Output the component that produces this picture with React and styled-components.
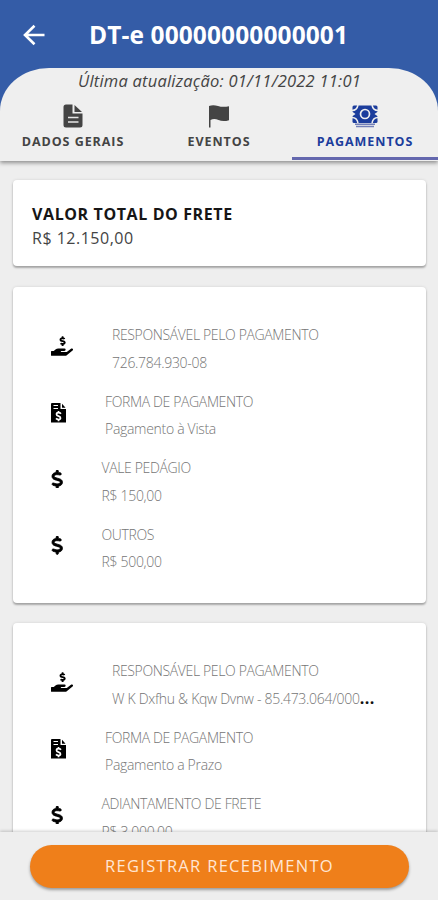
import React from "react";
import styled, { createGlobalStyle } from "styled-components";
import { FaHandHoldingUsd } from "react-icons/fa";
import { FaDollarSign } from "react-icons/fa6";

const GlobalStyle = createGlobalStyle`
  * { box-sizing: border-box; }
  body { margin: 0; background: #eeeeee; }
`;

const Screen = styled.div`
  width: 438px;
  height: 900px;
  display: flex;
  flex-direction: column;
  overflow: hidden;
  background: #eeeeee;
  font-family: "Open Sans", "Noto Sans", sans-serif;
  white-space: nowrap;
`;

const Header = styled.header`
  flex: none;
  height: 161px;
  background: linear-gradient(#345ca7 0 120px, #efefef 120px);
  box-shadow: 0 2px 4px rgba(0, 0, 0, 0.4);
  z-index: 1;
`;

const TitleBar = styled.div`
  height: 68px;
  display: flex;
  align-items: center;
  padding: 2px 0 0 22px;
`;

const BackButton = styled.button`
  width: 24px;
  height: 24px;
  padding: 0;
  border: 0;
  background: none;
  display: flex;
`;

const Title = styled.h1`
  margin: 0 0 0 43px;
  color: #fff;
  font-size: 24.5px;
  line-height: 34px;
  font-weight: 700;
  letter-spacing: 0.1px;
`;

const Sheet = styled.div`
  height: 93px;
  background: #efefef;
  border-radius: 49px 49px 0 0 / 43px 43px 0 0;
`;

const Updated = styled.div`
  height: 26px;
  padding-left: 1px;
  text-align: center;
  font-size: 16.5px;
  line-height: 26px;
  font-style: italic;
  color: #444;
  letter-spacing: 0.22px;
`;

const Tabs = styled.nav`
  display: grid;
  grid-template-columns: repeat(3, 1fr);
  height: 66px;
`;

const Tab = styled.button`
  border: 0;
  padding: 10px 0 0;
  background: none;
  border-bottom: 3px solid ${(p) => (p.$active ? "#6468ae" : "transparent")};
  color: ${(p) => (p.$active ? "#1c3d9c" : "#444444")};
  display: flex;
  flex-direction: column;
  align-items: center;
  gap: 4px;
  font: 700 12.5px/20px "Open Sans", sans-serif;
  letter-spacing: 0.95px;
`;

const Content = styled.main`
  flex: 1;
  min-height: 0;
  overflow: hidden;
  padding: 19px 12px 0 13px;
  display: flex;
  flex-direction: column;
  gap: 20px;
`;

const Card = styled.section`
  flex: none;
  background: #fff;
  border-radius: 4px;
  box-shadow: 0 2px 2px rgba(0, 0, 0, 0.28), 0 0 3px rgba(0, 0, 0, 0.12);
`;

const TotalCard = styled(Card)`
  height: 86px;
  margin-bottom: 1px;
  padding: 23px 19px;
`;

const PaymentCard = styled(Card)`
  height: 316px;
  padding: 34px 38px;
`;

const TotalLabel = styled.div`
  color: #161616;
  font-size: 16px;
  line-height: 23px;
  font-weight: 700;
  letter-spacing: 0.6px;
`;

const TotalValue = styled.div`
  color: #444;
  font-size: 16px;
  line-height: 23px;
  letter-spacing: 0.5px;
  padding-top: 1px;
`;

const Row = styled.div`
  height: 66.5px;
  display: flex;
  gap: 39px;
`;

const RowIcon = styled.span`
  display: flex;
  flex: none;
  height: 50px;
  width: ${(p) => p.$width}px;
  align-items: center;
  justify-content: center;
  color: #000;
`;

const RowText = styled.div`
  color: #757575;
  font-size: 14px;
  line-height: 27.5px;
  font-weight: 300;
`;

const Label = styled.div`
  letter-spacing: -0.36px;
`;

const Value = styled.div`
  display: flex;
  letter-spacing: -0.3px;
`;

const Ellipsis = styled.span`
  color: #111;
  font-weight: 700;
  font-size: 16px;
  letter-spacing: 0.5px;
`;

const Footer = styled.footer`
  flex: none;
  height: 68px;
  padding: 13px 29px 0 30px;
  background: #eeeeee;
  box-shadow: 0 -1px 3px rgba(0, 0, 0, 0.2);
  z-index: 1;
`;

const PrimaryButton = styled.button`
  width: 100%;
  height: 43px;
  border: 0;
  padding: 0 0 2px;
  border-radius: 22px;
  background: #ef7f1a;
  color: #ffe6d4;
  box-shadow: 0 2px 3px rgba(0, 0, 0, 0.35);
  font: 500 16.5px/41px "Open Sans", sans-serif;
  letter-spacing: 1.3px;
`;

const BackArrow = () => (
  <svg width="24" height="24" viewBox="0 0 24 24" fill="none" stroke="#fff" strokeWidth="2.6">
    <path d="M22.5 12H3.2M12.5 2.8 3 12l9.5 9.2" />
  </svg>
);

const DocumentIcon = () => (
  <svg width="20" height="24" viewBox="0 0 20 24">
    <path fill="#444" d="M3 .5h6.500v9h10V21q0 2.500-2.500 2.500H3Q.5 23.500.5 21V3Q.5.5 3 .5Z" />
    <path fill="#444" d="M11.500 1 19 8h-7.500Z" />
    <path stroke="#e5e5e5" strokeWidth="1.700" d="M5 13.500h10.500M5 18h10.500" />
  </svg>
);

const FlagIcon = () => (
  <svg width="22" height="24" viewBox="0 0 22 24">
    <path fill="#444" d="M1 2Q5 .4 10 2t11 .2v14Q15 18 10.500 16T2.500 16v7.500H1Z" />
  </svg>
);

const CashIcon = () => (
  <svg width="26" height="24" viewBox="0 0 26 24">
    <rect x=".5" y="1.500" width="25" height="17.500" rx="1.500" fill="#1c3d9c" />
    <g fill="none" stroke="#efefef">
      <circle cx="13" cy="10" r="4.500" strokeWidth="1.700" />
      <path strokeWidth="1.500" d="M0 6.500Q5 6.500 6 1M20 1q1 5.500 6 5.500M0 13.500q5 0 6 5.500M20 19q1-5.500 6-5.500" />
    </g>
    <path fill="#efefef" d="M0 7.500 3.500 10 0 12.500ZM26 7.500 22.500 10l3.500 2.500Z" />
    <path stroke="#7380b9" strokeWidth="1.500" d="M3 20.300h20M4 22.400h18" />
  </svg>
);

const InvoiceIcon = () => (
  <svg width="15" height="20" viewBox="0 0 15 20">
    <path d="M1 0h8.500v6H15v13.500H0V1Q0 0 1 0Z" />
    <path d="M11 .8 14.500 4.700H11Z" />
    <path stroke="#fff" strokeWidth="1" d="M2.500 2.500H7M2.500 5.500H7" />
    <path
      fill="none"
      stroke="#fff"
      strokeWidth="1.700"
      d="M10 10.800Q9 9.700 7.500 9.700 5.500 9.700 5.500 11.300q0 1.300 2 1.800t2 1.800q0 1.600-2 1.600-1.500 0-2.500-1.100M7.500 8v1.700M7.500 16.500V18.200"
    />
  </svg>
);

const DollarIcon = styled(FaDollarSign)`
  flex: none;
  stroke: #000;
  stroke-width: 22px;
`;

const icons = {
  hand: { width: 22, glyph: <FaHandHoldingUsd size={22} /> },
  invoice: { width: 15, glyph: <InvoiceIcon /> },
  dollar: { width: 11.5, glyph: <DollarIcon size={18.500} /> },
};

const PaymentRow = ({ icon, label, value, clipped }) => (
  <Row>
    <RowIcon $width={icons[icon].width}>{icons[icon].glyph}</RowIcon>
    <RowText>
      <Label>{label}</Label>
      <Value>
        {value}
        {clipped && <Ellipsis>...</Ellipsis>}
      </Value>
    </RowText>
  </Row>
);

const first = [
  { icon: "hand", label: "RESPONSÁVEL PELO PAGAMENTO", value: "726.784.930-08" },
  { icon: "invoice", label: "FORMA DE PAGAMENTO", value: "Pagamento à Vista" },
  { icon: "dollar", label: "VALE PEDÁGIO", value: "R$ 150,00" },
  { icon: "dollar", label: "OUTROS", value: "R$ 500,00" },
];

const second = [
  { icon: "hand", label: "RESPONSÁVEL PELO PAGAMENTO", value: "W K Dxfhu & Kqw Dvnw - 85.473.064/000", clipped: true },
  { icon: "invoice", label: "FORMA DE PAGAMENTO", value: "Pagamento a Prazo" },
  { icon: "dollar", label: "ADIANTAMENTO DE FRETE", value: "R$ 3.000,00" },
];

export default function App() {
  return (
    <>
      <GlobalStyle />
      <Screen>
        <Header>
          <TitleBar>
            <BackButton aria-label="Voltar"><BackArrow /></BackButton>
            <Title>DT-e 00000000000001</Title>
          </TitleBar>
          <Sheet>
            <Updated>Última atualização: 01/11/2022 11:01</Updated>
            <Tabs>
              <Tab><DocumentIcon />DADOS GERAIS</Tab>
              <Tab><FlagIcon />EVENTOS</Tab>
              <Tab $active><CashIcon />PAGAMENTOS</Tab>
            </Tabs>
          </Sheet>
        </Header>
        <Content>
          <TotalCard>
            <TotalLabel>VALOR TOTAL DO FRETE</TotalLabel>
            <TotalValue>R$ 12.150,00</TotalValue>
          </TotalCard>
          <PaymentCard>
            {first.map((r) => <PaymentRow key={r.label} {...r} />)}
          </PaymentCard>
          <PaymentCard>
            {second.map((r) => <PaymentRow key={r.label} {...r} />)}
          </PaymentCard>
        </Content>
        <Footer>
          <PrimaryButton>REGISTRAR RECEBIMENTO</PrimaryButton>
        </Footer>
      </Screen>
    </>
  );
}
